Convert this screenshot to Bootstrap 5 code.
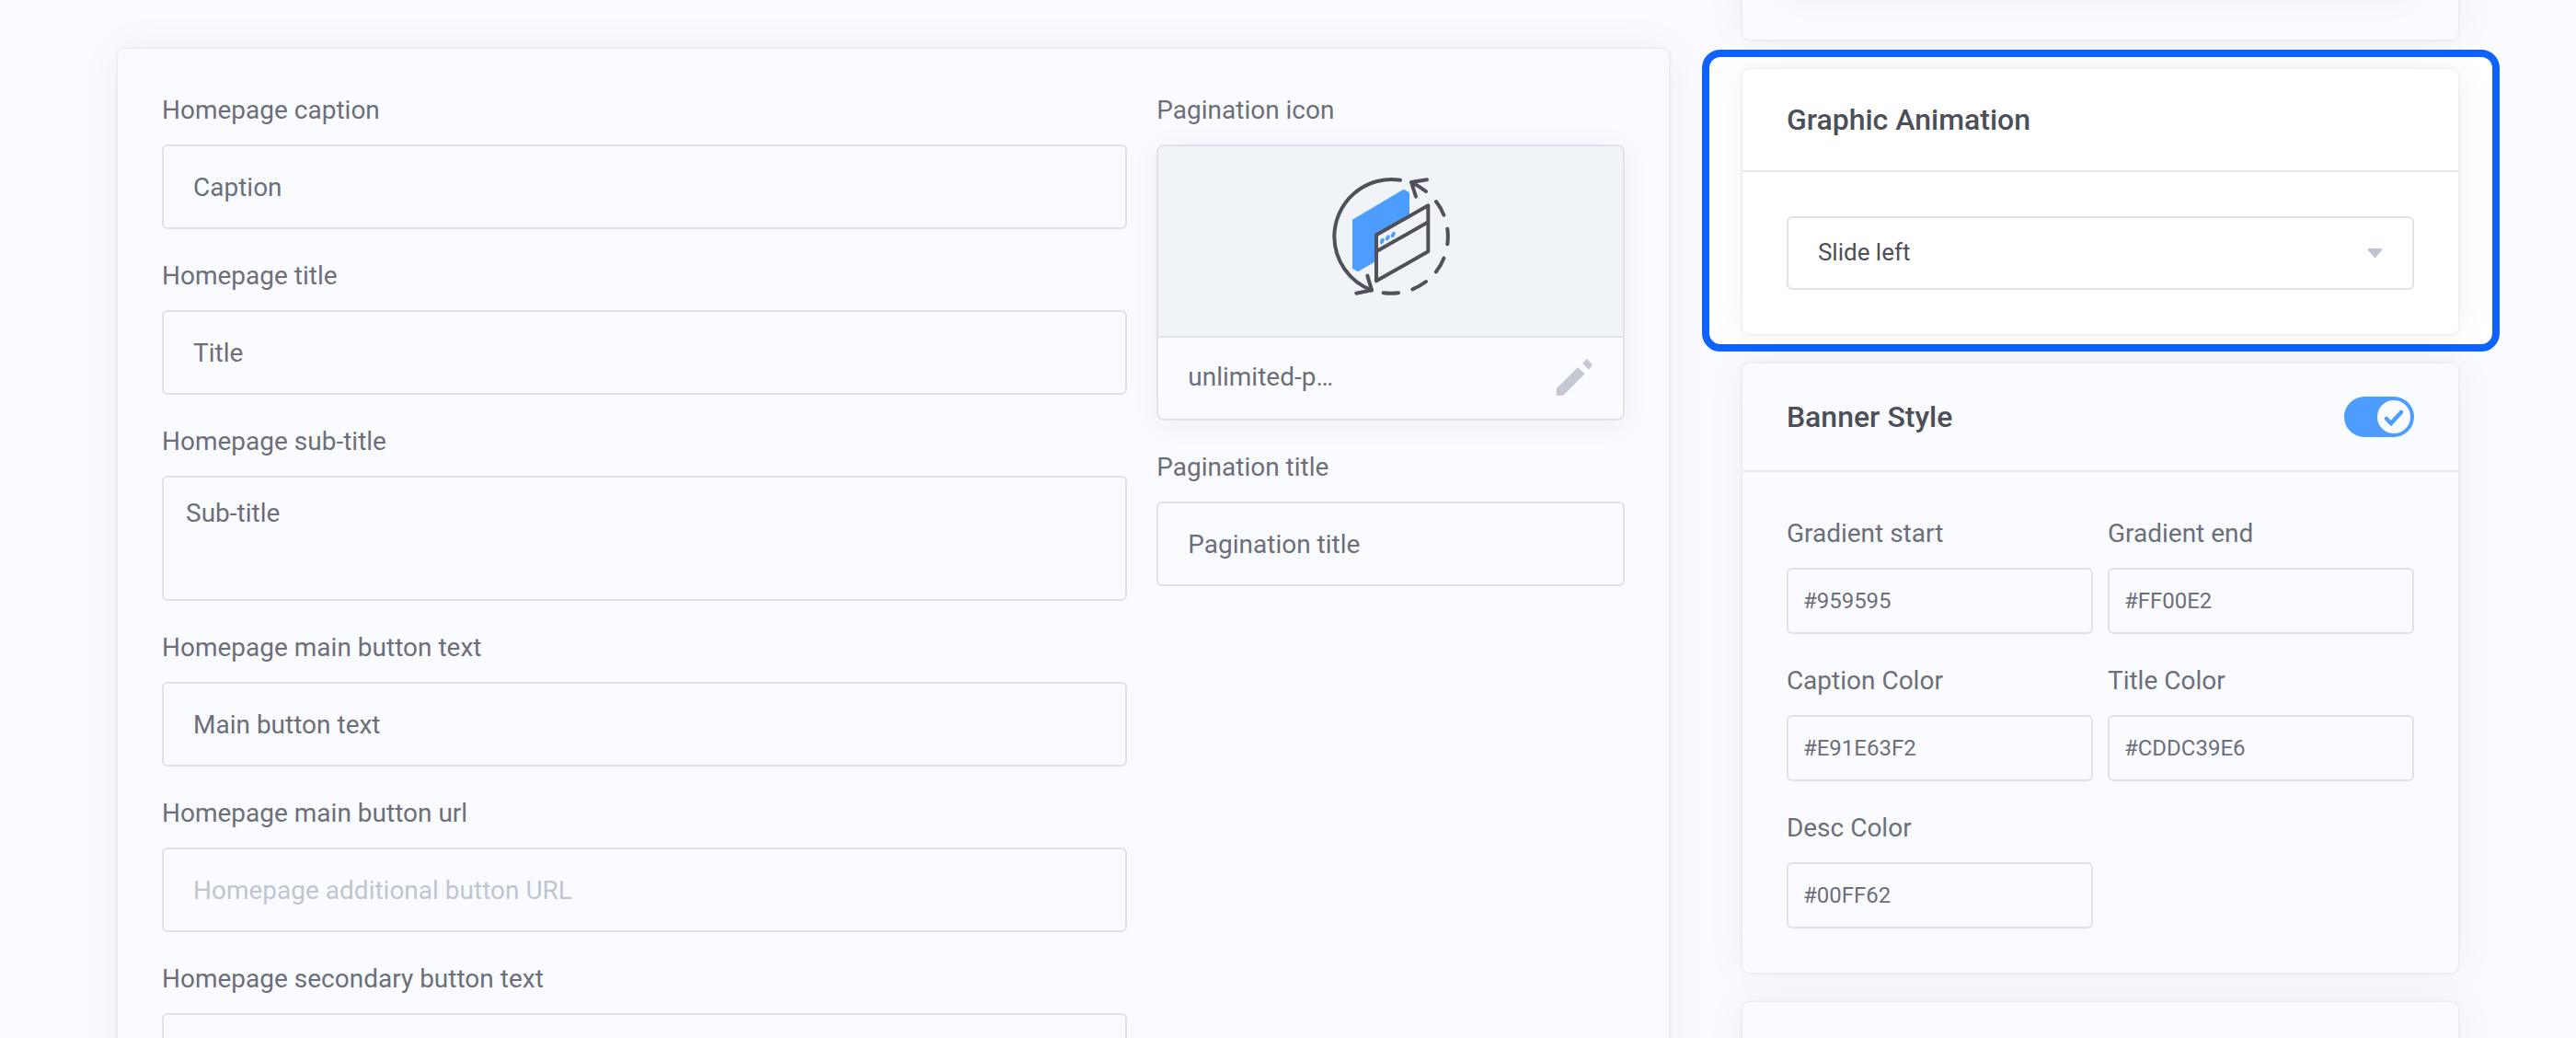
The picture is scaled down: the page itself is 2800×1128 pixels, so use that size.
<!DOCTYPE html>
<html lang="en">
<head>
<meta charset="utf-8">
<meta name="viewport" content="width=device-width, initial-scale=1">
<title>Homepage slide settings</title>
<link href="https://cdn.jsdelivr.net/npm/bootstrap@5.3.0/dist/css/bootstrap.min.css" rel="stylesheet">
<style>
  :root { --ink: #4d4f58; --text: #6c6f7a; --line: #e0e2e9; --page: #fafbff; --accent: #4d9dff; --frame: #0f62fe; }
  body { background: var(--page); color: var(--text); font-family: Roboto, "Liberation Sans", sans-serif; font-size: 28px; line-height: 36px; }
  .editor { display: grid; grid-template-columns: 13fr 6fr; column-gap: 80px; padding: 0 128px; height: 100vh; overflow: hidden; align-items: start; }
  .panel { background: var(--page); border-radius: 8px; box-shadow: 0 0 4px rgba(40, 42, 60, .12), 0 0 48px rgba(40, 42, 60, .05); }
  .panel-form { margin-top: 53px; padding: 48px; }
  .panel-body { padding: 48px; }
  .panel-head { padding: 36px 48px; border-bottom: 2px solid #e6e7ed; }
  .panel-head h2 { font-size: 32px; line-height: 38px; font-weight: 500; color: var(--ink); }
  .form-row { --bs-gutter-x: 32px; }
  .stack { display: flex; flex-direction: column; gap: 32px; }
  .form-label { display: block; line-height: 38px; margin-bottom: 18px; }
  .form-control, .form-select { border: 2px solid var(--line); border-radius: 6px; background-color: transparent; color: var(--text); font-size: 28px; line-height: 36px; padding: 27px 32px 25px; }
  .form-control::placeholder { color: #c0c6d1; opacity: 1; }
  textarea.form-control { height: 136px; padding: 21px 24px 19px; resize: none; }
  .color-input { font-size: 24px; padding: 16px; }
  .color-grid { display: grid; grid-template-columns: 1fr 1fr; gap: 32px 16px; }
  .form-select { color: var(--ink); font-size: 26px; padding: 19px 80px 21px 32px; background-image: url("data:image/svg+xml,%3Csvg xmlns='http://www.w3.org/2000/svg' viewBox='0 0 15 10'%3E%3Cpath d='M0 0h15v2L8 10H7L0 2z' fill='%23bec4cf'/%3E%3C/svg%3E"); background-size: 15px 10px; background-position: right 33px center; }
  .file-box { border: 2px solid var(--line); border-radius: 8px; box-shadow: 0 4px 32px rgba(40, 42, 60, .05); overflow: hidden; }
  .file-thumb { background: #f0f3f8; border-bottom: 2px solid var(--line); padding: 32px 0 44px; }
  .file-thumb svg { display: block; width: 128px; height: 130px; margin: 0 auto; }
  .file-name { padding: 23px 33px 25px 32px; }
  .file-name button { width: 40px; height: 40px; }
  .file-name svg { display: block; width: 40px; height: 40px; }
  .panel-prev { margin-top: -67px; padding: 0 54px 48px; }
  .preview-box { height: 62px; border-radius: 8px; box-shadow: 0 0 40px rgba(40, 42, 60, .06); }
  .side { display: flex; flex-direction: column; gap: 32px; }
  .spotlight { position: relative; z-index: 1; }
  .spotlight::before { content: ""; position: absolute; z-index: -1; inset: -21px -45px -19px -44px; background: #fff; border: 8px solid var(--frame); border-radius: 20px; }
  .spotlight .panel { background: #fff; }
  .switch { appearance: none; width: 76px; height: 44px; border-radius: 22px; background: var(--accent) url("data:image/svg+xml,%3Csvg xmlns='http://www.w3.org/2000/svg' viewBox='0 0 76 44'%3E%3Ccircle cx='54' cy='22' r='18' fill='%23fafbff'/%3E%3Cpath d='M46 24l5 5L62 17' fill='none' stroke='%234d9dff' stroke-width='4.5' stroke-linecap='round'/%3E%3C/svg%3E") center / 76px 44px no-repeat; cursor: pointer; }
</style>
<script src="https://cdn.jsdelivr.net/npm/bootstrap@5.3.0/dist/js/bootstrap.bundle.min.js"></script>
</head>
<body>
<main class="editor">
  <form class="panel panel-form">
    <div class="row form-row">
      <div class="col-8 stack">
        <div>
          <label class="form-label" for="caption">Homepage caption</label>
          <input class="form-control" id="caption" type="text" value="Caption">
        </div>
        <div>
          <label class="form-label" for="title">Homepage title</label>
          <input class="form-control" id="title" type="text" value="Title">
        </div>
        <div>
          <label class="form-label" for="subtitle">Homepage sub-title</label>
          <textarea class="form-control" id="subtitle">Sub-title</textarea>
        </div>
        <div>
          <label class="form-label" for="main-text">Homepage main button text</label>
          <input class="form-control" id="main-text" type="text" value="Main button text">
        </div>
        <div>
          <label class="form-label" for="main-url">Homepage main button url</label>
          <input class="form-control" id="main-url" type="text" placeholder="Homepage additional button URL">
        </div>
        <div>
          <label class="form-label" for="second-text">Homepage secondary button text</label>
          <input class="form-control" id="second-text" type="text">
        </div>
      </div>
      <div class="col-4 stack">
        <div>
          <span class="form-label">Pagination icon</span>
          <div class="file-box">
            <div class="file-thumb">
              <svg viewBox="84 63 384 390" fill="none" stroke="#4f5059" stroke-width="12" stroke-linecap="round" stroke-linejoin="round" aria-hidden="true">
                <path d="M150 206L317 107L336 118V196L222 256V344L168 376L150 365Z" fill="#4d9dff" stroke="none"/>
                <path d="M228 256L397 160V310L228 406Z M228 310L397 214"/>
                <g fill="#4d9dff" stroke="none">
                  <ellipse cx="247" cy="276" rx="6" ry="10" transform="rotate(28 247 276)"/>
                  <ellipse cx="265" cy="265" rx="6" ry="10" transform="rotate(28 265 265)"/>
                  <ellipse cx="283" cy="255" rx="6" ry="10" transform="rotate(28 283 255)"/>
                </g>
                <path d="M306 77A187 187 0 0 0 91 262A187 187 0 0 0 213 436"/>
                <path d="M199 389L213 436L163 446"/>
                <path d="M357 131L342 84L393 76M342 84Q368 97 390 114"/>
                <path d="M423 147Q439 167 448 191M460 236Q463 261 460 286M448 332Q439 356 423 376M390 408Q369 424 346 433M300 445Q276 448 251 445"/>
              </svg>
            </div>
            <div class="file-name d-flex align-items-center justify-content-between">
              <span>unlimited-p…</span>
              <button class="btn border-0 p-0" type="button" aria-label="Edit icon">
                <svg viewBox="94 62 118 118" fill="#c3c8d2" aria-hidden="true"><path d="M96 157L165 89L187 110L118 179H96Z M180 77L192 63H195L211 80V83L200 97Z"/></svg>
              </button>
            </div>
          </div>
        </div>
        <div>
          <label class="form-label" for="page-title">Pagination title</label>
          <input class="form-control" id="page-title" type="text" value="Pagination title">
        </div>
      </div>
    </div>
  </form>

  <aside class="side">
    <section class="panel panel-prev"><div class="preview-box"></div></section>

    <div class="spotlight">
      <section class="panel">
        <div class="panel-head"><h2 class="m-0"><label for="animation">Graphic Animation</label></h2></div>
        <div class="panel-body">
          <select class="form-select" id="animation"><option>Slide left</option></select>
        </div>
      </section>
    </div>

    <section class="panel">
      <div class="panel-head d-flex align-items-center justify-content-between">
        <h2 class="m-0"><label for="banner-style">Banner Style</label></h2>
        <input class="switch" id="banner-style" type="checkbox" role="switch" checked>
      </div>
      <div class="panel-body color-grid">
        <div>
          <label class="form-label" for="grad-start">Gradient start</label>
          <input class="form-control color-input" id="grad-start" type="text" value="#959595">
        </div>
        <div>
          <label class="form-label" for="grad-end">Gradient end</label>
          <input class="form-control color-input" id="grad-end" type="text" value="#FF00E2">
        </div>
        <div>
          <label class="form-label" for="caption-color">Caption Color</label>
          <input class="form-control color-input" id="caption-color" type="text" value="#E91E63F2">
        </div>
        <div>
          <label class="form-label" for="title-color">Title Color</label>
          <input class="form-control color-input" id="title-color" type="text" value="#CDDC39E6">
        </div>
        <div>
          <label class="form-label" for="desc-color">Desc Color</label>
          <input class="form-control color-input" id="desc-color" type="text" value="#00FF62">
        </div>
      </div>
    </section>

    <section class="panel"><div class="panel-body"></div></section>
  </aside>
</main>
</body>
</html>
